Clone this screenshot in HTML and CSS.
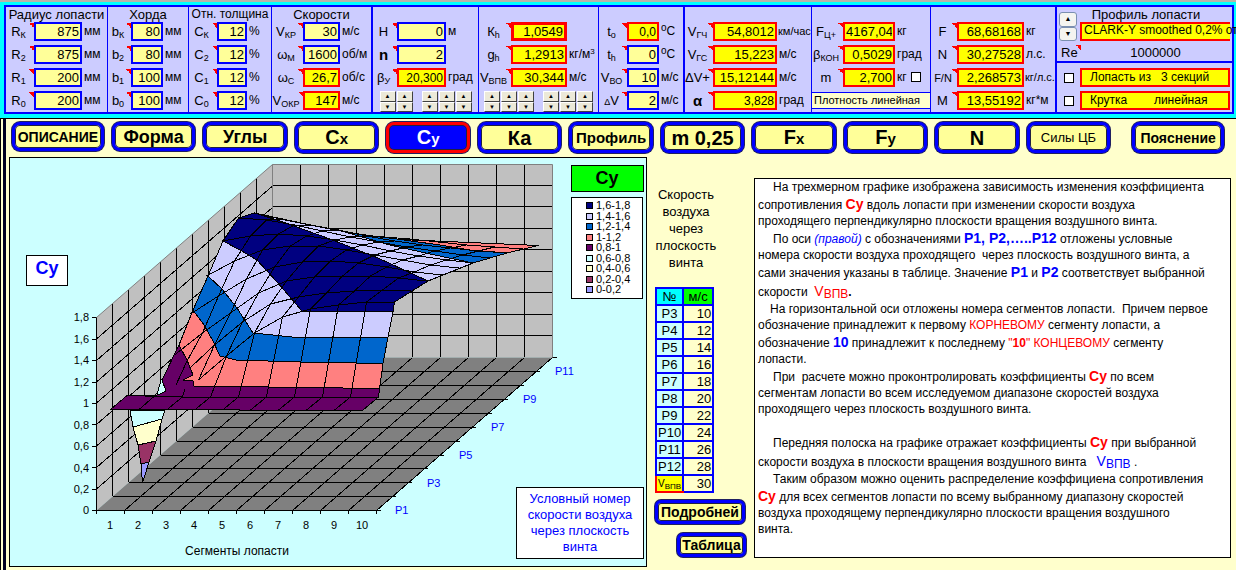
FILE: index.html
```html
<!DOCTYPE html>
<html lang="ru">
<head>
<meta charset="utf-8">
<title>Расчет воздушного винта</title>
<link rel="stylesheet" href="styles.css">
</head>
<body>
<header class="top">
<div class="panel">
  <section class="group g-radius">
    <h2>Радиус лопасти</h2>
    <div class="rows">
      <label for="rk">R<sub>К</sub></label><input id="rk" value="875"><span>мм</span>
      <label for="r2">R<sub>2</sub></label><input id="r2" value="875"><span>мм</span>
      <label for="r1">R<sub>1</sub></label><input id="r1" value="200"><span>мм</span>
      <label for="r0">R<sub>0</sub></label><input id="r0" value="200"><span>мм</span>
    </div>
  </section>
  <section class="group g-chord">
    <h2>Хорда</h2>
    <div class="rows">
      <label for="bk">b<sub>К</sub></label><input id="bk" value="80"><span>мм</span>
      <label for="b2">b<sub>2</sub></label><input id="b2" value="80"><span>мм</span>
      <label for="b1">b<sub>1</sub></label><input id="b1" value="100"><span>мм</span>
      <label for="b0">b<sub>0</sub></label><input id="b0" value="100"><span>мм</span>
    </div>
  </section>
  <section class="group g-thick">
    <h2>Отн. толщина</h2>
    <div class="rows">
      <label for="ck">C<sub>К</sub></label><input id="ck" value="12"><span>%</span>
      <label for="c2">C<sub>2</sub></label><input id="c2" value="12"><span>%</span>
      <label for="c1">C<sub>1</sub></label><input id="c1" value="12"><span>%</span>
      <label for="c0">C<sub>0</sub></label><input id="c0" value="12"><span>%</span>
    </div>
  </section>
  <section class="group g-speed strong">
    <h2>Скорости</h2>
    <div class="rows">
      <label for="vkr">V<sub>КР</sub></label><input id="vkr" value="30"><span>м/с</span>
      <label for="wm">ω<sub>М</sub></label><input id="wm" value="1600"><span>об/м</span>
      <label for="wc">ω<sub>С</sub></label><input id="wc" class="calc" value="26,7" readonly><span>об/с</span>
      <label for="vokr">V<sub>ОКР</sub></label><input id="vokr" class="calc" value="147" readonly><span>м/с</span>
    </div>
  </section>
  <section class="group g-height plain">
    <div class="rows">
      <label for="h">H</label><input id="h" value="0"><span>м</span>
      <label for="n"><b>n</b></label><input id="n" value="2"><span></span>
      <label for="by">β<sub>У</sub></label><input id="by" class="calc small" value="20,300" readonly><span>град</span>
      <div class="spins">
        <div class="spin"><button aria-label="Больше">▲</button><button aria-label="Меньше">▼</button></div>
        <div class="spin"><button aria-label="Больше">▲</button><button aria-label="Меньше">▼</button></div>
        <div class="spin apart"><button aria-label="Больше">▲</button><button aria-label="Меньше">▼</button></div>
        <div class="spin"><button aria-label="Больше">▲</button><button aria-label="Меньше">▼</button></div>
        <div class="spin"><button aria-label="Больше">▲</button><button aria-label="Меньше">▼</button></div>
      </div>
    </div>
  </section>
  <section class="group g-air plain">
    <div class="rows">
      <label for="kh">К<sub>h</sub></label><input id="kh" class="calc thick" value="1,0549" readonly><span></span>
      <label for="gh">g<sub>h</sub></label><input id="gh" class="calc" value="1,2913" readonly><span>кг/м<sup class="cube">3</sup></span>
      <label for="vvpv">V<sub>ВПВ</sub></label><input id="vvpv" class="calc" value="30,344" readonly><span>м/с</span>
      <div class="spins">
        <div class="spin"><button aria-label="Больше">▲</button><button aria-label="Меньше">▼</button></div>
        <div class="spin"><button aria-label="Больше">▲</button><button aria-label="Меньше">▼</button></div>
        <div class="spin"><button aria-label="Больше">▲</button><button aria-label="Меньше">▼</button></div>
        <div class="spin apart"><button aria-label="Больше">▲</button><button aria-label="Меньше">▼</button></div>
        <div class="spin"><button aria-label="Больше">▲</button><button aria-label="Меньше">▼</button></div>
        <div class="spin"><button aria-label="Больше">▲</button><button aria-label="Меньше">▼</button></div>
      </div>
    </div>
  </section>
  <section class="group g-temp strong plain">
    <div class="rows">
      <label for="t0">t<sub>о</sub></label><input id="t0" class="calc small" value="0,0" readonly><span><sup>о</sup>С</span>
      <label for="th">t<sub>h</sub></label><input id="th" value="0"><span><sup>о</sup>С</span>
      <label for="vvo">V<sub>ВО</sub></label><input id="vvo" value="10"><span>м/с</span>
      <label for="dv"><small>Δ</small>V</label><input id="dv" value="2"><span>м/с</span>
    </div>
  </section>
  <section class="group g-tip plain">
    <div class="rows">
      <label for="vgch">V<sub>ГЧ</sub></label><input id="vgch" class="calc" value="54,8012" readonly><span class="tight">км/час</span>
      <label for="vgs">V<sub>ГС</sub></label><input id="vgs" class="calc" value="15,223" readonly><span>м/с</span>
      <label for="dvp">ΔV+</label><input id="dvp" class="calc" value="15,12144" readonly><span>м/с</span>
      <label for="al"><b>α</b></label><input id="al" class="calc small" value="3,828" readonly><span>град</span>
    </div>
  </section>
  <section class="group g-mass plain">
    <div class="rows">
      <label for="fc">F<sub>Ц+</sub></label><input id="fc" class="calc" value="4167,04" readonly><span>кг</span>
      <label for="bkon">β<sub>КОН</sub></label><input id="bkon" class="calc" value="0,5029" readonly><span>град</span>
      <label for="m">m</label><input id="m" class="calc" value="2,700" readonly><span>кг <input type="checkbox" aria-label="Задать массу"></span>
      <div class="density">Плотность линейная</div>
    </div>
  </section>
  <section class="group g-force strong plain">
    <div class="rows">
      <label for="f">F</label><input id="f" class="calc" value="68,68168" readonly><span>кг</span>
      <label for="pw">N</label><input id="pw" class="calc" value="30,27528" readonly><span>л.с.</span>
      <label for="fn" class="tight">F/N</label><input id="fn" class="calc" value="2,268573" readonly><span class="tight">кг/л.с.</span>
      <label for="mm">M</label><input id="mm" class="calc" value="13,55192" readonly><span>кг*м</span>
    </div>
  </section>
  <section class="group g-profile">
    <div class="profile">
      <div class="spin big"><button aria-label="Следующий профиль">▲</button><button aria-label="Предыдущий профиль">▼</button></div>
      <div class="profile-name">
        <h2>Профиль лопасти</h2>
        <output class="airfoil">CLARK-Y smoothed 0,2% от</output>
      </div>
    </div>
    <div class="reynolds"><span class="mark">Re</span><output>1000000</output></div>
    <div class="options">
      <input type="checkbox" id="o1"><label for="o1">Лопасть из &nbsp; 3 секций</label>
      <input type="checkbox" id="o2"><label for="o2">Крутка &nbsp; &nbsp; &nbsp; &nbsp;линейная</label>
    </div>
  </section>
</div>
</header>

<div class="sheet">
<nav class="tabs">
  <button class="tab wide low t14">ОПИСАНИЕ</button>
  <button class="tab low t18">Форма</button>
  <button class="tab low t18">Углы</button>
  <button class="tab">C<small>x</small></button>
  <button class="tab active" aria-current="page">C<small>y</small></button>
  <button class="tab">Ка</button>
  <button class="tab t15">Профиль</button>
  <button class="tab">m 0,25</button>
  <button class="tab">F<small>x</small></button>
  <button class="tab">F<small>y</small></button>
  <button class="tab">N</button>
  <button class="tab light">Силы ЦБ</button>
  <button class="tab wide last t14">Пояснение</button>
</nav>

<main class="main">
<figure class="chart">
<svg viewBox="10 158 636 408" role="img" aria-label="Зависимость Cy от сегмента лопасти и скорости воздуха">
  <path class="wall" d="M96.5 317.5 272.5 164.5 272.5 357.5 96.5 510.5Z"/>
  <path class="wall" d="M272.5 164.5H552.5V357.5H272.5Z"/>
  <path class="floor" d="M96.5 510.5 272.5 357.5H552.5L376.5 510.5Z"/>
  <g class="grid">
    <path d="M112.5 304V496M128.5 290V482M144.5 276V468M160.5 262V455M176.5 248V441M192.5 234V427M208.5 220V413M224.5 206V399M240.5 192V385M256.5 178V371"/>
    <path d="M96.5 489 272.5 336M96.5 467.5 272.5 314.5M96.5 446 272.5 293M96.5 424.5 272.5 271.5M96.5 403 272.5 250M96.5 382 272.5 229M96.5 360.5 272.5 207.5M96.5 339 272.5 186"/>
    <path d="M272.5 185.5H552M272.5 206.5H552M272.5 228.5H552M272.5 249.5H552M272.5 271.5H552M272.5 292.5H552M272.5 314.5H552M272.5 335.5H552"/>
    <path d="M300.5 164V357M328.5 164V357M356.5 164V357M384.5 164V357M412.5 164V357M440.5 164V357M468.5 164V357M496.5 164V357M524.5 164V357"/>
    <path d="M124.5 510.5 300.5 357.5M152.5 510.5 328.5 357.5M180.5 510.5 356.5 357.5M208.5 510.5 384.5 357.5M236.5 510.5 412.5 357.5M264.5 510.5 440.5 357.5M292.5 510.5 468.5 357.5M320.5 510.5 496.5 357.5M348.5 510.5 524.5 357.5M376.5 510.5 552.5 357.5"/>
    <path d="M112.5 496.5H396M128.5 482.5H412M144.5 468.5H428M160.5 455.5H444M176.5 441.5H460M192.5 427.5H476M208.5 413.5H492M224.5 399.5H508M240.5 385.5H524M256.5 371.5H540M552 357.5H557"/>
    <path d="M96.5 317V514M92 510.5H381M92 489.5H97M92 467.5H97M92 446.5H97M92 424.5H97M92 403.5H97M92 382.5H97M92 360.5H97M92 339.5H97M92 317.5H97"/>
    <path d="M124.5 510V514M152.5 510V514M180.5 510V514M208.5 510V514M236.5 510V514M264.5 510V514M292.5 510V514M320.5 510V514M348.5 510V514M376.5 510V514"/>
  </g>
  <path class="edge" d="M96.5 317.5 272.5 164.5H552.5V357.5M272.5 164.5V357"/>
  <g class="surface">
    <path class="b4" d="M130 410 133 427 162 419 165 410Z"/>
    <path class="b3" d="M133 427 138 445 156 441 162 419Z"/>
    <path class="b2" d="M138 445 141 464 149 462 156 441Z"/>
    <path class="b1" d="M141 464 142.500 483 149 462Z"/>
    <path class="b4" d="M161 380 163 378 166 392 157 395Z"/>
    <path class="b8" d="M254.500 213 280 219 330 229 365 235.500 410 242 473 263 428 281 378 258 330 239 280 221Z"/>
    <path class="b7" d="M345 232 380 237 410 240.500 440 245 507 253 473 263 430 254 390 245Z"/>
    <path class="b6" d="M400 239.500 538.500 245.500 507 253 470 250 440 245Z"/>
    <path class="b9" d="M223 241 238.500 218 254.500 213 280 221 330 239 378 258 428 281 394.500 302 393 312 302 311 277 282 257 260 240 250Z"/>
    <path class="b8" d="M223 241 240 250 257 260 277 282 302 311 393 312 388 337H292L253 333 237 308 222 289 208 276Z"/>
    <path class="b7" d="M208 276 222 289 237 308 253 333 292 337H388L383 363.500 300 362 236 360 220 356 213 341 204 325 193 310Z"/>
    <path class="b6" d="M193 310 204 325 213 341 220 356 236 360 300 362 383 363.500 379.500 388.500 193 386V381L183 380 193 375 187 360 179 345Z"/>
    <path class="b5" d="M179 345 187 360 193 375 183 380 193 381V386L379.500 388.500 378.500 397 362.500 410.500 110.500 409.500 127 395.500 158 395 166 391 162 380Z"/>
  </g>
  <g class="mesh">
    <path d="M126.500 395.500 182 397H378.500M198.500 380 226.500 356 254.500 333 282.500 317 310.500 309 338.500 305 366.500 302H394.500"/>
    <path d="M191 367 214.500 345 242.500 322 270.500 304 298.500 297 326.500 293 354.500 291 382.500 290 410.500 291"/>
    <path d="M174.500 355 202.500 333 230.500 313 258.500 293 286.500 281 314.500 277 342.500 276H370.500L398.500 278 426.500 281"/>
    <path d="M190.500 314 218.500 296 246.500 279 274.500 267 302.500 262 330.500 261 358.500 263 386.500 267 414.500 272 442.500 275"/>
    <path d="M206.500 276 234.500 261 262.500 250 290.500 246H318.500L346.500 250 374.500 255 402.500 260 430.500 265 458.500 268"/>
    <path d="M222.500 241 250.500 236 278.500 234 306.500 236 334.500 240 362.500 245 390.500 251 418.500 256 446.500 260 474.500 263"/>
    <path d="M238.500 218 266.500 220 294.500 225 322.500 231 350.500 237 378.500 242 406.500 247 434.500 251 462.500 255 490.500 258"/>
    <path d="M254.500 213 282.500 219 310.500 225 338.500 230 366.500 236 394.500 241 422.500 245 450.500 248 478.500 251 506.500 253"/>
    <path d="M366 235.500 410 239 466.500 245 494.500 247 522.500 249"/>
    <path d="M138.500 410 154.500 396M176 385 186.500 362 202.500 333 218.500 296 234.500 261 250.500 236 266.500 220 282.500 219"/>
    <path d="M166.500 410 182.500 397 185 389M198.500 380 214.500 345 230.500 313 246.500 279 262.500 250 278.500 234 294.500 225 310.500 225"/>
    <path d="M194.500 410 210.500 397 226.500 356 242.500 322 258.500 293 274.500 267 290.500 246 306.500 236 322.500 231 338.500 230"/>
    <path d="M222.500 410 238.500 397 254.500 333 270.500 304 286.500 281 302.500 262 318.500 246 334.500 240 350.500 237 366.500 236"/>
    <path d="M250.500 410 266.500 397 282.500 317 298.500 297 314.500 277 330.500 261 346.500 250 362.500 245 378.500 242 394.500 241"/>
    <path d="M278.500 410 294.500 397 310.500 309 326.500 293 342.500 276 358.500 263 374.500 255 390.500 251 406.500 247 422.500 245"/>
    <path d="M306.500 410 322.500 397 338.500 305 354.500 291 370.500 276 386.500 267 402.500 260 418.500 256 434.500 251 450.500 248 466.500 245"/>
    <path d="M334.500 410 350.500 397 366.500 302 382.500 290 398.500 278 414.500 272 430.500 265 446.500 260 462.500 255 478.500 251 494.500 247"/>
  </g>
  <g class="axis end">
    <text x="89" y="321">1,8</text><text x="89" y="343">1,6</text><text x="89" y="364">1,4</text><text x="89" y="386">1,2</text><text x="89" y="407">1</text><text x="89" y="429">0,8</text><text x="89" y="450">0,6</text><text x="89" y="472">0,4</text><text x="89" y="493">0,2</text><text x="89" y="514">0</text>
  </g>
  <g class="axis mid">
    <text x="110" y="529">1</text><text x="138" y="529">2</text><text x="166" y="529">3</text><text x="194" y="529">4</text><text x="222" y="529">5</text><text x="250" y="529">6</text><text x="278" y="529">7</text><text x="306" y="529">8</text><text x="334" y="529">9</text><text x="362" y="529">10</text>
  </g>
  <text class="caption mid" x="237" y="555">Сегменты лопасти</text>
  <g class="axis depth">
    <text x="395" y="514">P1</text><text x="427" y="487">P3</text><text x="459" y="459">P5</text><text x="491" y="431">P7</text><text x="523" y="403">P9</text><text x="555" y="375">P11</text>
  </g>
  <rect class="box" x="26.500" y="255.500" width="41" height="30"/>
  <text class="name blue mid" x="47" y="274">Cy</text>
  <rect class="box green" x="571.500" y="165.500" width="72" height="26"/>
  <text class="name mid" x="607" y="184">Cy</text>
  <rect class="box" x="571.500" y="197.500" width="71" height="101"/>
  <g class="keys">
    <rect class="b9" x="586.500" y="202.500" width="6" height="6"/><rect class="b8" x="586.500" y="213.500" width="6" height="6"/><rect class="b7" x="586.500" y="223.500" width="6" height="6"/><rect class="b6" x="586.500" y="234.500" width="6" height="6"/><rect class="b5" x="586.500" y="244.500" width="6" height="6"/><rect class="b4" x="586.500" y="255.500" width="6" height="6"/><rect class="b3" x="586.500" y="265.500" width="6" height="6"/><rect class="b2" x="586.500" y="276.500" width="6" height="6"/><rect class="b1" x="586.500" y="286.500" width="6" height="6"/>
  </g>
  <g class="axis">
    <text x="596" y="209">1,6-1,8</text><text x="596" y="220">1,4-1,6</text><text x="596" y="230">1,2-1,4</text><text x="596" y="241">1-1,2</text><text x="596" y="251">0,8-1</text><text x="596" y="262">0,6-0,8</text><text x="596" y="272">0,4-0,6</text><text x="596" y="283">0,2-0,4</text><text x="596" y="293">0-0,2</text>
  </g>
  <rect class="box" x="516.500" y="487.500" width="127" height="71"/>
  <g class="note mid">
    <text x="580" y="503">Условный номер</text><text x="580" y="519">скорости воздуха</text><text x="580" y="535">через плоскость</text><text x="580" y="551">винта</text>
  </g>
</svg>
</figure>

<aside class="side">
  <p>Скорость воздуха через плоскость винта</p>
  <table>
    <thead><tr><th>№</th><th>м/с</th></tr></thead>
    <tbody>
      <tr><td>P3</td><td>10</td></tr>
      <tr><td>P4</td><td>12</td></tr>
      <tr><td>P5</td><td>14</td></tr>
      <tr><td>P6</td><td>16</td></tr>
      <tr><td>P7</td><td>18</td></tr>
      <tr><td>P8</td><td>20</td></tr>
      <tr><td>P9</td><td>22</td></tr>
      <tr><td>P10</td><td>24</td></tr>
      <tr><td>P11</td><td>26</td></tr>
      <tr><td>P12</td><td>28</td></tr>
      <tr><td class="sel">V<sub>ВПВ</sub></td><td>30</td></tr>
    </tbody>
  </table>
  <button class="tab more">Подробней</button>
  <button class="tab more short">Таблица</button>
</aside>

<article class="text">
  <p class="in">На трехмерном графике изображена зависимость изменения коэффициента<br>сопротивления <b class="red">Су</b> вдоль лопасти при изменении скорости воздуха<br>проходящего перпендикулярно плоскости вращения воздушного винта.</p>
  <p class="in">По оси <i>(правой)</i> с обозначениями <b>Р1, Р2,…..Р12</b> отложены условные<br>номера скорости воздуха проходящего&nbsp; через плоскость воздушного винта, а<br>сами значения указаны в таблице. Значение <b>Р1</b> и <b>Р2</b> соответствует выбранной<br>скорости&nbsp; <span class="v red">V<sub>ВПВ</sub></span><strong>.</strong></p>
  <p class="in less">На горизонтальной оси отложены номера сегментов лопасти.&nbsp; Причем первое<br>обозначение принадлежит к первому <span class="red">КОРНЕВОМУ</span> сегменту лопасти, а<br>обозначение <b>10</b> принадлежит к последнему <span class="red">"<strong>10</strong>" КОНЦЕВОМУ</span> сегменту<br>лопасти.</p>
  <p class="in">При&nbsp; расчете можно проконтролировать коэффициенты <b class="red">Су</b> по всем<br>сегментам лопасти во всем исследуемом диапазоне скоростей воздуха<br>проходящего через плоскость воздушного винта.</p>
  <p class="in gap">Передняя полоска на графике отражает коэффициенты <b class="red">Су</b> при выбранной<br>скорости воздуха в плоскости вращения воздушного винта &nbsp; <span class="v">V<sub>ВПВ</sub></span> .</p>
  <p class="in">Таким образом можно оценить распределение коэффициена сопротивления<br><b class="red">Су</b> для всех сегментов лопасти по всему выбранному диапазону скоростей<br>воздуха проходящему перпендикулярно плоскости вращения воздушного<br>винта.</p>
</article>
</main>
</div>
</body>
</html>
```
FILE: styles.css
```css
* { box-sizing: border-box; }
body {
  margin: 0;
  background: #ffffcc;
  color: #000;
  font: 12px/16px "Liberation Sans", Arial, sans-serif;
  overflow-x: hidden;
}
h2, p, figure { margin: 0; }
button, input { font: inherit; color: inherit; border-radius: 0; margin: 0; }
sub, sup { font-size: 10px; line-height: 0; }
sub { vertical-align: -2px; }
sup { vertical-align: 4px; }
.cube { font-size: 8px; }

.top {
  background: #00ffff;
  border-top: 2px solid #b8b4a8;
  border-bottom: 1px solid #000;
  padding: 3px 2px 4px 4px;
}
.panel {
  display: grid;
  grid-template-columns: 102fr 81fr 83fr 101fr 106fr 120fr 86fr 127fr 119fr 126fr 175fr;
  border: 2px solid #0000ff;
  background: #ccccff;
}
.group {
  min-width: 0;
  border-right: 1px solid #0000ff;
  padding-bottom: 2px;
}
.group.strong { border-right-width: 2px; }
.group:last-child { border-right: 0; }
.group h2 { font-size: 13px; font-weight: normal; line-height: 15px; text-align: center; white-space: nowrap; }
.g-thick h2 { font-size: 12px; }
.plain { padding-top: 15px; }
.rows { display: grid; grid-auto-rows: 19px; row-gap: 4px; }
.g-radius .rows { grid-template-columns: 28px 1fr 25px; }
.g-chord .rows { grid-template-columns: 23px 1fr 25px; }
.g-thick .rows { grid-template-columns: 28px 1fr 24px; }
.g-speed .rows { grid-template-columns: 31px 1fr 31px; }
.g-height .rows { grid-template-columns: 24px 1fr 32px; }
.g-air .rows { grid-template-columns: 32px 1fr 31px; }
.g-temp .rows { grid-template-columns: 28px 1fr 24px; }
.g-tip .rows { grid-template-columns: 28px 1fr 34px; }
.g-mass .rows { grid-template-columns: 31px 1fr 35px; }
.g-force .rows { grid-template-columns: 26px 1fr 31px; }
.rows label {
  font-size: 13px;
  line-height: 20px;
  text-align: center;
  padding-right: 3px;
  white-space: nowrap;
  background: linear-gradient(to bottom left, #ff0000 50%, transparent 50%) right 1px / 5px 5px no-repeat;
}
.rows label b { font-size: 15px; }
.rows label small { font-size: 9px; }
.rows label sub { font-size: 9px; }
.rows span { line-height: 19px; padding-left: 2px; white-space: nowrap; }
.rows .tight { font-size: 11px; padding-left: 1px; }
.rows > input {
  width: 100%;
  min-width: 0;
  height: 19px;
  border: 2px solid #0000ff;
  background: #ffff99;
  padding: 0 1px;
  font-size: 13px;
  text-align: right;
}
.rows > input.calc { border-color: #ff0000; background: #ffff00; }
.rows > input.small { font-size: 12px; }
.rows > input.thick { border-width: 3px; }
input[type="checkbox"] {
  appearance: none;
  width: 10px;
  height: 10px;
  border: 1px solid #000;
  background: #fff;
  vertical-align: -1px;
  margin-left: 1px;
}
.spins { grid-column: 1 / -1; display: flex; justify-content: center; gap: 1px; }
.spin { display: flex; flex-direction: column; width: 16px; height: 21px; }
.spin.apart { margin-left: 8px; }
.spin button {
  flex: 1;
  min-height: 0;
  padding: 0;
  border: 1px solid;
  border-color: #fff #404040 #404040 #fff;
  background: #ece9d8;
  font-size: 6px;
  line-height: 6px;
}
.density {
  grid-column: 1 / -1;
  margin: 1px 0;
  border: solid #0000ff;
  border-width: 1px 0;
  background: #ffffcc;
  padding-left: 2px;
  font-size: 11px;
  line-height: 15px;
  white-space: nowrap;
}
.g-profile { padding-bottom: 0; }
.profile { display: flex; gap: 3px; padding-left: 2px; }
.profile-name { flex: 1; min-width: 0; }
.profile-name h2 { padding-right: 20px; }
.spin.big { width: 18px; height: 29px; margin-top: 5px; }
.spin.big button { border: 1px solid #7a8fb0; border-radius: 3px; background: #f4f4f0; font-size: 7px; }
.airfoil {
  display: block;
  height: 19px;
  margin-right: 2px;
  border: solid #ff0000;
  border-width: 2px 0 2px 2px;
  background: #ffff00;
  padding-left: 2px;
  font-size: 12px;
  line-height: 13px;
  white-space: nowrap;
}
.reynolds {
  display: flex;
  height: 22px;
  padding: 4px 2px 0 4px;
  border-bottom: 2px solid #0000ff;
  font-size: 13px;
}
.reynolds output { flex: 1; text-align: center; }
.mark { width: 20px; background: linear-gradient(to bottom left, #ff0000 50%, transparent 50%) right 0 / 5px 5px no-repeat; }
.options {
  display: grid;
  grid-template-columns: 10px 1fr;
  gap: 4px 6px;
  align-items: center;
  padding: 5px 2px 0 7px;
}
.options input { margin: 0; }
.options label {
  height: 19px;
  border: 2px solid #ff0000;
  background: #ffff00;
  font-size: 12px;
  line-height: 14px;
  padding-left: 8px;
  white-space: nowrap;
}

.sheet {
  border-left: 1px solid #000;
  background: linear-gradient(#000020, #000020) 2px 0 / 3px 100% no-repeat;
  padding: 2px 5px 3px 8px;
}
.tabs { display: flex; gap: 8px; padding: 1px 7px 1px 3px; align-items: flex-start; }
.tab {
  flex: 83 1 0;
  min-width: 0;
  height: 31px;
  padding: 0;
  border: 3px solid #0000ff;
  border-radius: 8px;
  background: #ffff99;
  box-shadow: inset 0 0 0 1px #202040, 0 0 0 1px #202060;
  font-size: 20px;
  font-weight: bold;
  line-height: 20px;
  white-space: nowrap;
}
.tab small { font-size: 15px; }
.tab.wide { flex-grow: 92; }
.tab.low { height: 29px; }
.tab.last { margin-left: 14px; height: 31px; }
.tab.active { border-color: #ff0000; background: #0000ff; color: #fff; }
.tab.light { font-size: 13px; font-weight: normal; }
.tab.t14 { font-size: 14px; }
.tab.t15 { font-size: 15px; }
.tab.t18 { font-size: 18px; }

.main {
  display: grid;
  grid-template-columns: minmax(0, 638fr) 91px minmax(0, 477fr);
  column-gap: 8px;
  align-items: start;
  margin-top: 3px;
}
.chart { border: 1px solid #000; background: #ccffff; }
.chart svg { display: block; width: 100%; height: auto; font-size: 11px; }
.wall { fill: #c0c0c0; }
.floor { fill: #808080; }
.edge { fill: none; stroke: #808080; }
.grid, .mesh { fill: none; stroke: #000; shape-rendering: crispEdges; }
.surface, .keys { stroke: #000; shape-rendering: crispEdges; }
.b1 { fill: #9999ff; }
.b2 { fill: #993366; }
.b3 { fill: #ffffcc; }
.b4 { fill: #ccffff; }
.b5 { fill: #660066; }
.b6 { fill: #ff8080; }
.b7 { fill: #0066cc; }
.b8 { fill: #ccccff; }
.b9 { fill: #000080; }
.box { fill: #fff; stroke: #000; }
.box.green { fill: #00ff00; }
.end { text-anchor: end; }
.mid { text-anchor: middle; }
.caption { font-size: 12px; }
.depth, .note, .blue { fill: #0000ff; }
.note { font-size: 13px; }
.name { font-size: 18px; font-weight: bold; }

.side { padding-top: 29px; display: flex; flex-direction: column; align-items: flex-start; }
.side p { width: 62px; font-size: 13px; line-height: 17px; text-align: center; }
.side table { border-collapse: collapse; margin: 16px 0 7px; font-size: 13px; }
.side th, .side td { height: 17px; padding: 0 1px; border: 2px solid #0000ff; line-height: 15px; font-weight: normal; }
.side th:first-child, .side td:first-child { width: 26px; text-align: center; background: #ccffff; }
.side th + th, .side td + td { width: 30px; text-align: right; background: #ffffcc; }
.side th:first-child { background: #00ffff; }
.side th + th { background: #00ff00; text-align: center; }
.side td.sel:first-child { background: #ffff00; border-left-color: #ff0000; border-bottom-color: #ff0000; font-size: 10px; }
.sel sub { font-size: 8px; }
.tab.more { flex: none; width: 90px; height: 24px; border-radius: 6px; font-size: 14px; line-height: 16px; margin-bottom: 9px; }
.tab.short { width: 69px; align-self: flex-end; margin-bottom: 0; }

.text {
  margin-top: 21px;
  min-height: 380px;
  border: 1px solid #000;
  background: #fff;
  padding: 0 0 0 3px;
  white-space: nowrap;
}
.in { text-indent: 15px; }
.less { text-indent: 12px; }
.gap { margin-top: 16px; }
.text b { font-size: 14px; line-height: 18px; color: #0000ff; }
.text i { color: #0000ff; }
.text .v { font-size: 14px; line-height: 20px; color: #0000ff; }
.text .v sub { font-size: 12px; }
.text .red { color: #ff0000; }
```
